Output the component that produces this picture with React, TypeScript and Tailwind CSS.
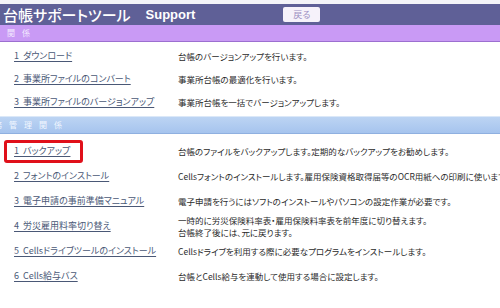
import React from "react";

const jp = {
  fontFamily: '"Noto Sans CJK JP", "Liberation Sans", sans-serif',
  fontFeatureSettings: '"palt"',
} as React.CSSProperties;

type Row = { link: string; desc: string[]; hl?: boolean };

const sec1: Row[] = [
  { link: "1\u00a0\u00a0ダウンロード", desc: ["台帳のバージョンアップを行います。"] },
  { link: "2\u00a0\u00a0事業所ファイルのコンバート", desc: ["事業所台帳の最適化を行います。"] },
  { link: "3\u00a0\u00a0事業所ファイルのバージョンアップ", desc: ["事業所台帳を一括でバージョンアップします。"] },
];

const sec2: Row[] = [
  { link: "1\u00a0\u00a0バックアップ", desc: ["台帳のファイルをバックアップします。定期的なバックアップをお勧めします。"], hl: true },
  { link: "2\u00a0\u00a0フォントのインストール", desc: ["Cellsフォントのインストールします。雇用保険資格取得届等のOCR用紙への印刷に使います"] },
  { link: "3\u00a0\u00a0電子申請の事前準備マニュアル", desc: ["電子申請を行うにはソフトのインストールやパソコンの設定作業が必要です。"] },
  { link: "4\u00a0\u00a0労災雇用料率切り替え", desc: ["一時的に労災保険料率表・雇用保険料率表を前年度に切り替えます。", "台帳終了後には、元に戻ります。"] },
  { link: "5\u00a0\u00a0Cellsドライブツールのインストール", desc: ["Cellsドライブを利用する際に必要なプログラムをインストールします。"] },
  { link: "6\u00a0\u00a0Cells給与バス", desc: ["台帳とCells給与を連動して使用する場合に設定します。"] },
];

function RowView({ r, h }: { r: Row; h: string }) {
  return (
    <div className={`flex items-center ${h}`}>
      <div className="w-[178px] shrink-0 pl-[14px] relative text-[9px] leading-[12px]">
        {r.hl && (
          <div className="absolute left-[4px] top-[-5px] w-[79px] h-[23px] border-[3px] border-[#e0101a] rounded-[3px]" />
        )}
        <span className="text-[9px] leading-[12px] text-[#4a5876] underline underline-offset-2 whitespace-nowrap" style={jp}>
          {r.link}
        </span>
      </div>
      <div className="text-[8.5px] leading-[12px] text-[#2a2a2a] whitespace-nowrap" style={jp}>
        {r.desc.map((d, i) => (
          <div key={i}>{d}</div>
        ))}
      </div>
    </div>
  );
}

export default function App() {
  return (
    <div className="w-[500px] h-[308px] overflow-hidden bg-white">
      <div className="h-[4px] bg-[#f4f4f8]" />
      <div className="h-[21px] bg-[#5f6097] flex items-center pl-[3px]">
        <span className="text-white text-[15px] leading-[20px] font-medium" style={jp}>
          台帳サポートツール
        </span>
        <span className="ml-[15px] text-white text-[13px] font-bold" style={{ fontFamily: '"Liberation Sans", sans-serif' }}>
          Support
        </span>
        <div className="ml-[88px] w-[37px] h-[15px] bg-[#f6f2fa] rounded-[2px] flex items-center justify-center">
          <span className="text-[9px] text-[#9c8fc2] leading-none" style={jp}>戻る</span>
        </div>
      </div>
      <div className="h-[17px] bg-[#c99af5] border-b border-[#9c6fd0] flex items-center pl-[7px]">
        <span className="text-[8px] text-[#f4ecff] leading-none tracking-[7px]" style={jp}>関係</span>
      </div>
      <div className="pt-[2px] h-[74px]">
        {sec1.map((r, i) => (
          <RowView key={i} r={r} h="h-[23px]" />
        ))}
      </div>
      <div className="h-[18px] border-t border-[#dbe8f8] bg-gradient-to-b from-[#bcd4f3] to-[#a6c4ee] border-b border-b-[#8fb0e0] flex items-center overflow-hidden">
        <span className="text-[8px] text-[#f2f7ff] leading-none tracking-[7px] ml-[-6px] whitespace-nowrap" style={jp}>務管理関係</span>
      </div>
      <div className="pt-[4px]">
        {sec2.map((r, i) => (
          <RowView key={i} r={r} h="h-[25px]" />
        ))}
      </div>
    </div>
  );
}
